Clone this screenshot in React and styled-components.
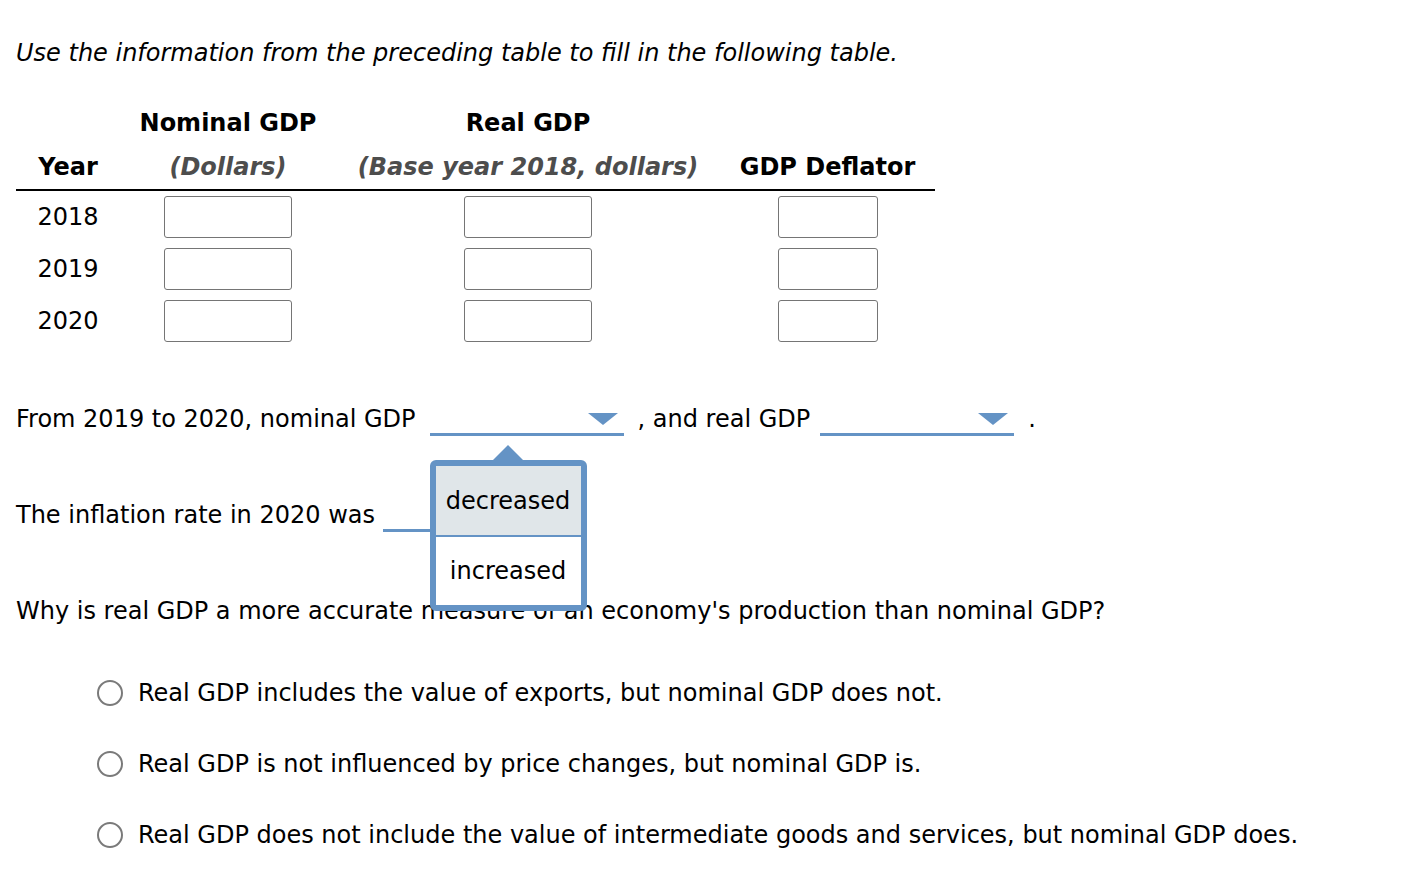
import styled, { createGlobalStyle } from "styled-components";

const GlobalStyle = createGlobalStyle`
  body {
    margin: 0;
    background: #fff;
    font-family: "DejaVu Sans", Verdana, sans-serif;
    color: #000;
  }
`;

const Page = styled.div`
  padding: 38px 16px 40px;
  font-size: 24px;
  line-height: 30px;
`;

const Intro = styled.p`
  margin: 0;
  font-style: italic;
`;

const Grid = styled.div`
  display: grid;
  grid-template-columns: 104px 216px 384px 215px;
  margin-top: 33px;
  width: 919px;
`;

const HeadCell = styled.div`
  height: 44px;
  display: flex;
  align-items: center;
  justify-content: center;
  font-weight: bold;
  color: ${(p) => (p.$sub ? "#4d4d4d" : "#000")};
  font-style: ${(p) => (p.$sub ? "italic" : "normal")};
  border-bottom: ${(p) => (p.$line ? "2px solid #000" : "none")};
  white-space: nowrap;
`;

const Cell = styled.div`
  height: 52px;
  display: flex;
  align-items: center;
  justify-content: center;
`;

const Box = styled.div`
  width: ${(p) => p.$w}px;
  height: 42px;
  box-sizing: border-box;
  border: 1.5px solid #757575;
  border-radius: 3px;
  background: #fff;
`;

const Line = styled.div`
  display: flex;
  align-items: flex-start;
  height: 38px;
  line-height: 38px;
  margin-top: ${(p) => p.$mt}px;
  white-space: pre;
`;

const Drop = styled.div`
  position: relative;
  width: 194px;
  height: 36px;
  box-sizing: border-box;
  border-bottom: 3px solid #6493c5;
  margin: 0 ${(p) => p.$mr}px 0 ${(p) => p.$ml}px;
  flex-shrink: 0;
  z-index: ${(p) => (p.$open ? 5 : 1)};

  &::after {
    content: "";
    position: absolute;
    right: 6px;
    top: 13px;
    border-left: 15px solid transparent;
    border-right: 15px solid transparent;
    border-top: 12px solid #6493c5;
  }
`;

const Popup = styled.div`
  position: absolute;
  left: 0;
  top: 60px;
  width: 157px;
  box-sizing: border-box;
  border: 6px solid #6493c5;
  border-radius: 6px;
  background: #fff;

  &::before {
    content: "";
    position: absolute;
    left: 57px;
    top: -21px;
    border-left: 15px solid transparent;
    border-right: 15px solid transparent;
    border-bottom: 15px solid #6493c5;
  }
`;

const Option = styled.div`
  height: ${(p) => p.$h}px;
  display: flex;
  align-items: center;
  justify-content: center;
  background: ${(p) => (p.$hi ? "#e0e6e9" : "#fff")};
  border-bottom: ${(p) => (p.$div ? "2px solid #6493c5" : "none")};
`;

const Question = styled.p`
  margin: 62px 0 0;
  position: relative;
  z-index: 0;
`;

const Choices = styled.div`
  display: flex;
  flex-direction: column;
  gap: 31px;
  margin-top: 47px;
  padding-left: 81px;
`;

const Choice = styled.label`
  display: flex;
  align-items: center;
  height: 40px;
  gap: 15px;
`;

const Radio = styled.span`
  width: 26px;
  height: 26px;
  box-sizing: border-box;
  border: 2px solid #7a7a7a;
  border-radius: 50%;
  background: #fff;
  flex-shrink: 0;
`;

const years = ["2018", "2019", "2020"];

const choices = [
  "Real GDP includes the value of exports, but nominal GDP does not.",
  "Real GDP is not influenced by price changes, but nominal GDP is.",
  "Real GDP does not include the value of intermediate goods and services, but nominal GDP does.",
];

const App = () => {
  return (
    <Page>
      <GlobalStyle />
      <Intro>Use the information from the preceding table to fill in the following table.</Intro>

      <Grid>
        <HeadCell />
        <HeadCell>Nominal GDP</HeadCell>
        <HeadCell>Real GDP</HeadCell>
        <HeadCell />
        <HeadCell $line>Year</HeadCell>
        <HeadCell $line $sub>(Dollars)</HeadCell>
        <HeadCell $line $sub>(Base year 2018, dollars)</HeadCell>
        <HeadCell $line>GDP Deflator</HeadCell>
        {years.map((y) => [
          <Cell key={y + "y"}>{y}</Cell>,
          <Cell key={y + "n"}><Box $w={128} /></Cell>,
          <Cell key={y + "r"}><Box $w={128} /></Cell>,
          <Cell key={y + "d"}><Box $w={100} /></Cell>,
        ])}
      </Grid>

      <Line $mt={53}>
        From 2019 to 2020, nominal GDP
        <Drop $ml={14} $mr={14} $open>
          <Popup>
            <Option $h={69} $hi $div>decreased</Option>
            <Option $h={68}>increased</Option>
          </Popup>
        </Drop>
        , and real GDP
        <Drop $ml={10} $mr={14} />
        .
      </Line>

      <Line $mt={58}>
        The inflation rate in 2020 was
        <Drop $ml={8} $mr={0} />
      </Line>

      <Question>Why is real GDP a more accurate measure of an economy's production than nominal GDP?</Question>

      <Choices>
        {choices.map((c) => (
          <Choice key={c}>
            <Radio />
            {c}
          </Choice>
        ))}
      </Choices>
    </Page>
  );
};

export default App;
